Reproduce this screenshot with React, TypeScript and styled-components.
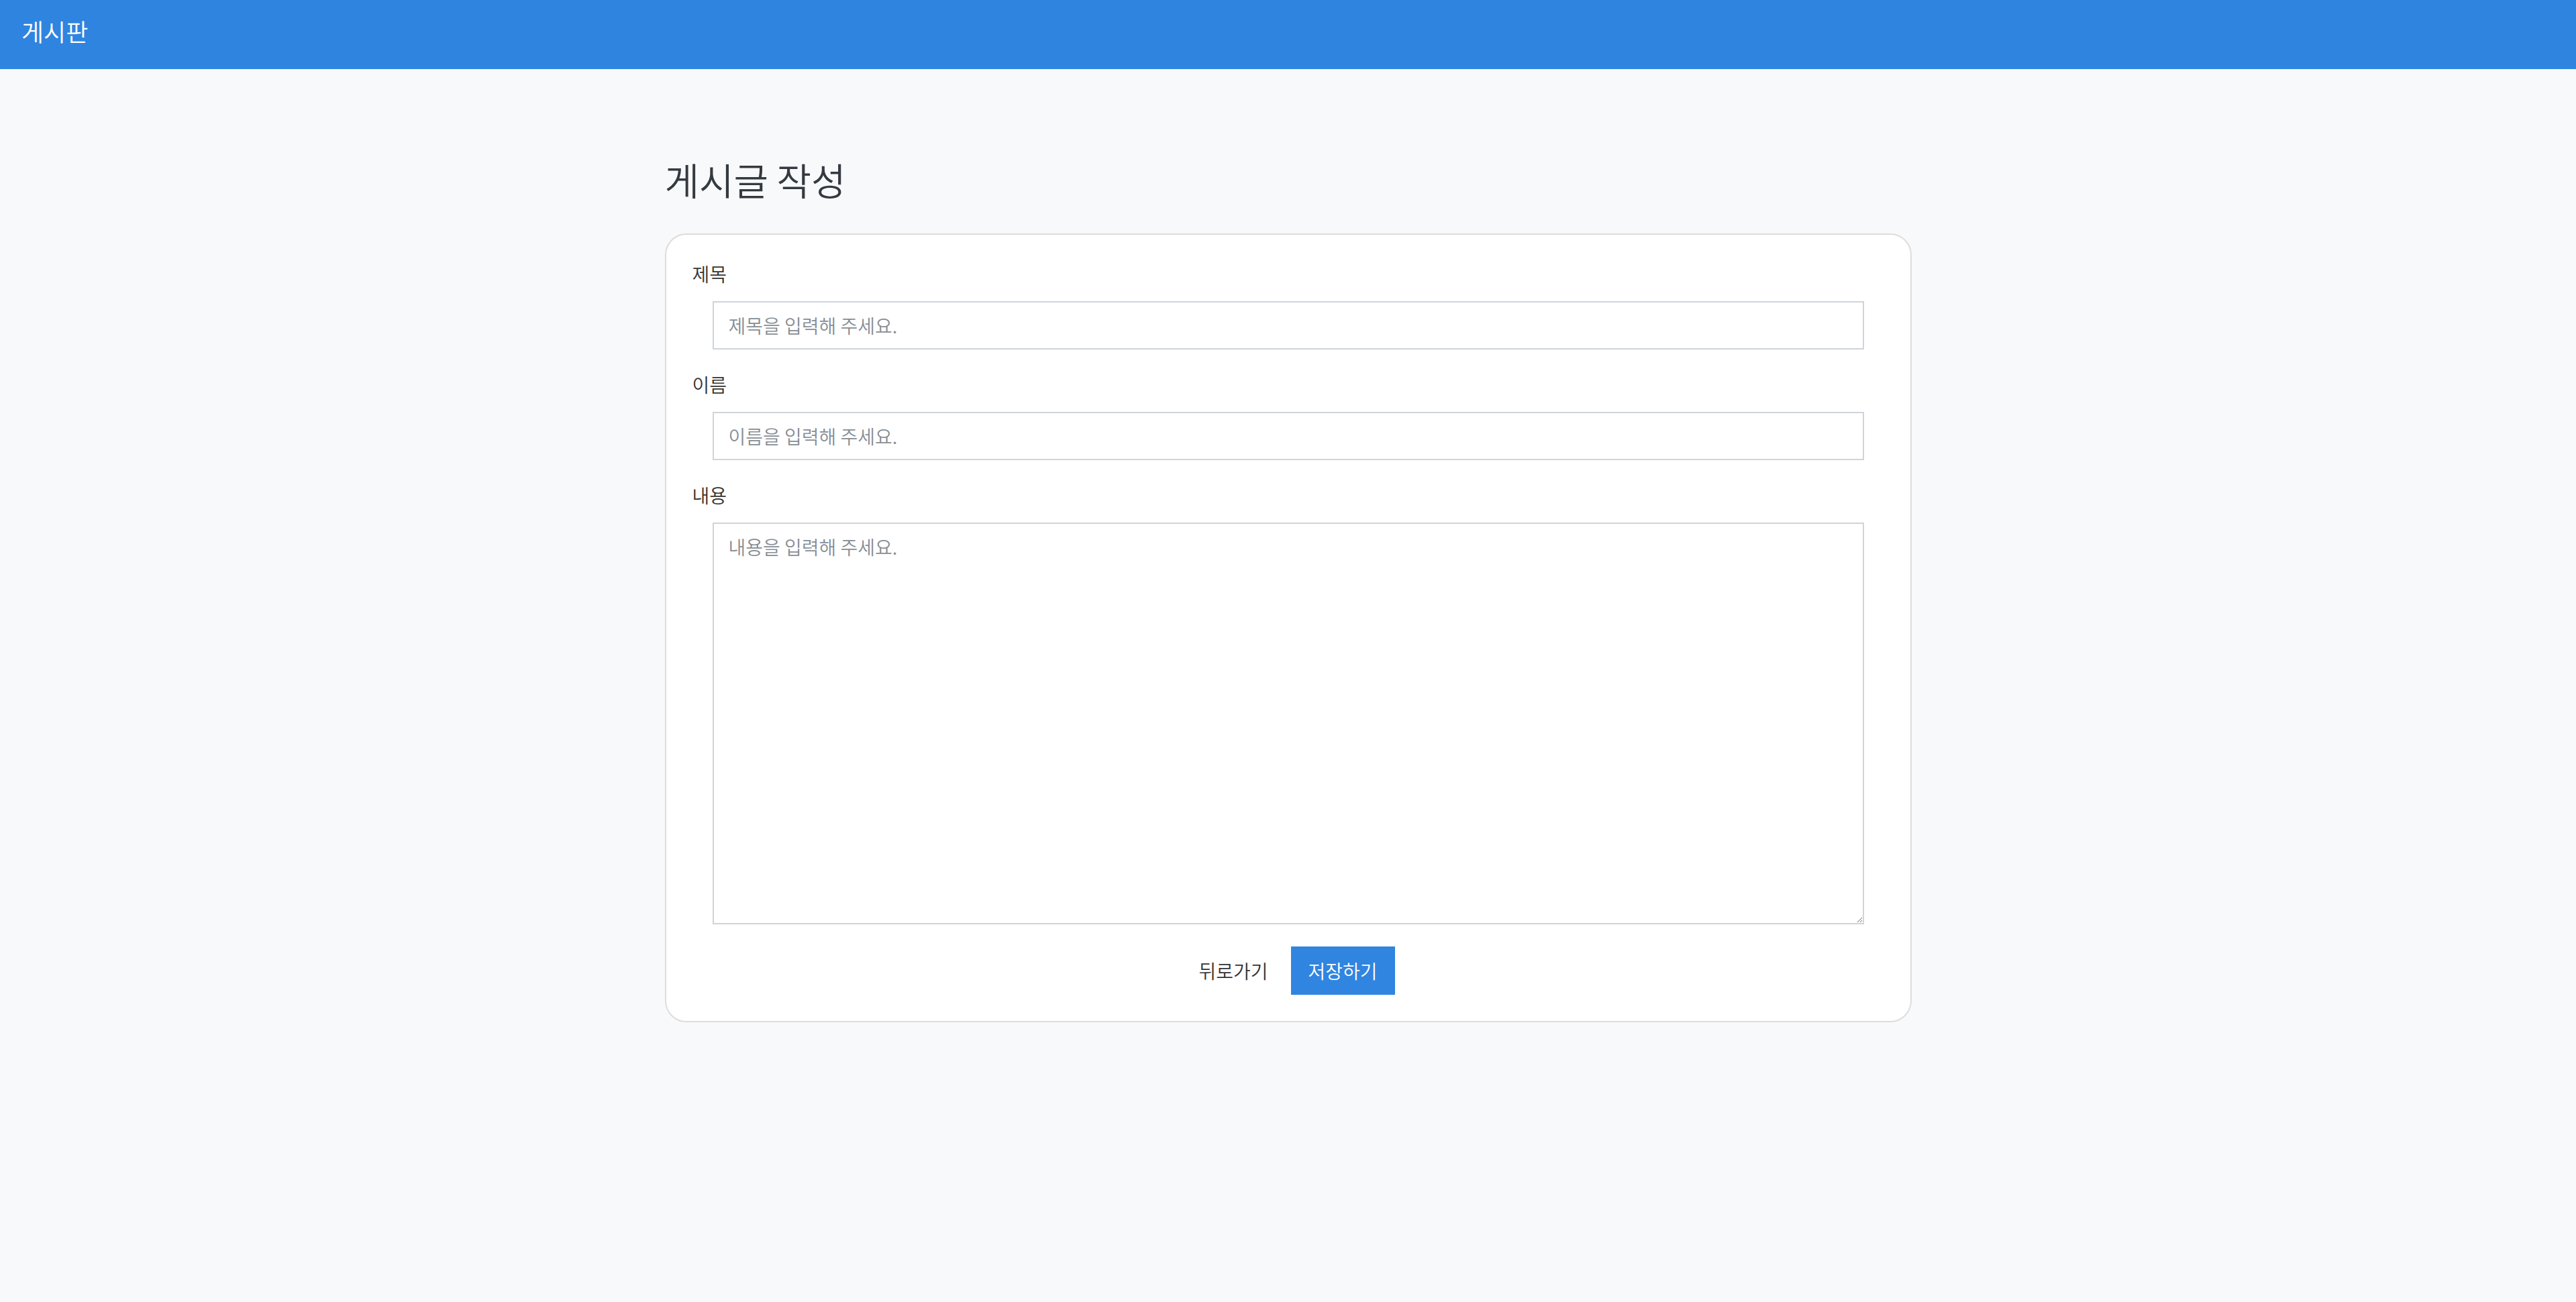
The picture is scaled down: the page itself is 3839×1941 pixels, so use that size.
import React from "react";
import styled, { createGlobalStyle } from "styled-components";

const GlobalStyle = createGlobalStyle`
  html, body {
    margin: 0;
    padding: 0;
    background: #f8f9fa;
    font-family: "Noto Sans CJK KR", "Noto Sans", sans-serif;
    font-weight: 350;
    color: #333333;
  }
  * { box-sizing: border-box; }
`;

const Page = styled.div`
  min-height: 1941px;
  background: #f8f9fa;
  display: flex;
  flex-direction: column;
`;

const NavBar = styled.header`
  height: 103px;
  background: #2f84e0;
  padding: 19px 32px 30px;
`;

const Brand = styled.a`
  color: #ffffff;
  font-size: 36px;
  line-height: 54px;
  font-weight: 350;
  text-decoration: none;
`;

const Container = styled.main`
  width: 1858px;
  margin: 0 auto;
  padding-top: 130px;
`;

const Title = styled.h2`
  margin: 0 0 48px;
  font-size: 56px;
  line-height: 67px;
  font-weight: 350;
  color: #343a40;
`;

const Card = styled.form`
  background: #ffffff;
  border: 2px solid #dddddd;
  border-radius: 32px;
  padding: 37px 39px 39px;
  display: flex;
  flex-direction: column;
`;

const Field = styled.div<{ $gap?: number }>`
  display: flex;
  flex-direction: column;
  margin-bottom: ${(p) => p.$gap ?? 31}px;
`;

const Label = styled.label`
  font-size: 28px;
  line-height: 42px;
  font-weight: 350;
  color: #333333;
  margin-bottom: 20px;
`;

const inputBase = `
  margin: 0 30px;
  border: 2px solid #ced4da;
  border-radius: 0;
  background: #ffffff;
  font-family: "Noto Sans CJK KR", "Noto Sans", sans-serif;
  font-weight: 350;
  font-size: 28px;
  line-height: 42px;
  color: #212529;
  padding: 13px 22px;
  outline: none;
  &::placeholder { color: #868e96; }
`;

const TextInput = styled.input`
  ${inputBase}
  height: 72px;
`;

const TextArea = styled.textarea`
  ${inputBase}
  height: 599px;
  resize: vertical;
`;

const Actions = styled.div`
  display: flex;
  justify-content: center;
  gap: 8px;
`;

const Button = styled.button<{ $primary?: boolean }>`
  border: none;
  border-radius: 0;
  height: 72px;
  padding: 0 26px;
  font-family: "Noto Sans CJK KR", "Noto Sans", sans-serif;
  font-weight: 350;
  font-size: 28px;
  line-height: 42px;
  cursor: pointer;
  background: ${(p) => (p.$primary ? "#3085e0" : "transparent")};
  color: ${(p) => (p.$primary ? "#ffffff" : "#333333")};
`;

export default function App() {
  return (
    <>
      <GlobalStyle />
      <Page>
        <NavBar>
          <Brand href="#">게시판</Brand>
        </NavBar>
        <Container>
          <Title>게시글 작성</Title>
          <Card onSubmit={(e) => e.preventDefault()}>
            <Field>
              <Label htmlFor="title">제목</Label>
              <TextInput id="title" placeholder="제목을 입력해 주세요." />
            </Field>
            <Field>
              <Label htmlFor="name">이름</Label>
              <TextInput id="name" placeholder="이름을 입력해 주세요." />
            </Field>
            <Field $gap={33}>
              <Label htmlFor="content">내용</Label>
              <TextArea id="content" placeholder="내용을 입력해 주세요." />
            </Field>
            <Actions>
              <Button type="button">뒤로가기</Button>
              <Button type="submit" $primary>
                저장하기
              </Button>
            </Actions>
          </Card>
        </Container>
      </Page>
    </>
  );
}
